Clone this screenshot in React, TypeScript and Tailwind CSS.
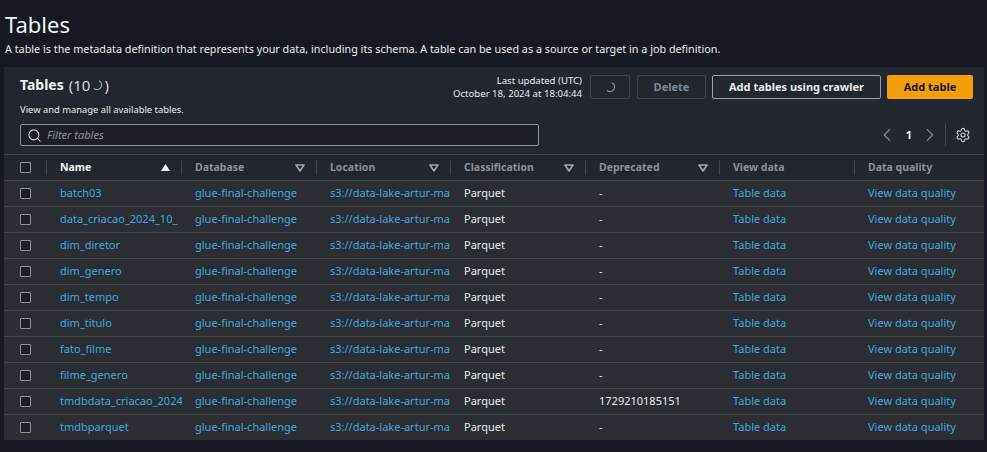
import { ChevronLeft, ChevronRight, Search, Settings } from 'lucide-react';

const FONT = 'font-["Noto_Sans",sans-serif]';

const TABLE_NAMES = [
  'batch03',
  'data_criacao_2024_10_',
  'dim_diretor',
  'dim_genero',
  'dim_tempo',
  'dim_titulo',
  'fato_filme',
  'filme_genero',
  'tmdbdata_criacao_2024',
  'tmdbparquet',
];

const HEADERS = [
  { label: 'Database', width: 'w-[135px]', filter: true },
  { label: 'Location', width: 'w-[134px]', filter: true },
  { label: 'Classification', width: 'w-[135px]', filter: true },
  { label: 'Deprecated', width: 'w-[134px]', filter: true },
  { label: 'View data', width: 'w-[135px]', filter: false },
  { label: 'Data quality', width: 'flex-1', filter: false },
];

function Spinner({ size, className }: { size: number; className: string }) {
  return (
    <svg width={size} height={size} viewBox="0 0 16 16" fill="none" className={className}>
      <path d="M11 2.8A6 6 0 0 1 8 14a6 6 0 0 1-3.5-1.1" stroke="currentColor" strokeWidth="1.5" strokeLinecap="round" />
    </svg>
  );
}

function FilterCaret() {
  return (
    <svg width="10" height="8" viewBox="0 0 10 8" fill="none" className="shrink-0">
      <path d="M1 1h8L5 7z" stroke="#9ba7b6" strokeWidth="1.6" strokeLinejoin="round" />
    </svg>
  );
}

function Checkbox() {
  return <div className="size-[11px] rounded-[1px] border border-[#8d9199] bg-[#1b1e26]" />;
}

function Row({ name }: { name: string }) {
  const deprecated = name === 'tmdbdata_criacao_2024' ? '1729210185151' : '-';
  return (
    <div className="flex h-[26px] items-center border-t border-[#41454c] bg-[#2a2d33] pb-[2px] text-[11px] leading-[16px]">
      <div className="flex w-[43px] shrink-0 pl-[16px] pt-[2px]">
        <Checkbox />
      </div>
      <div className="w-[135px] shrink-0 overflow-hidden whitespace-nowrap pl-[13px] text-[#44a9dc]">{name}</div>
      <div className="w-[135px] shrink-0 pl-[13px] text-[#44a9dc]">glue-final-challenge</div>
      <div className="w-[134px] shrink-0 overflow-hidden whitespace-nowrap pl-[13px] text-[#44a9dc]">
        s3://data-lake-artur-ma
      </div>
      <div className="w-[135px] shrink-0 pl-[13px] text-[#e9ebed]">Parquet</div>
      <div className="w-[134px] shrink-0 pl-[13px] text-[#e9ebed]">{deprecated}</div>
      <div className="w-[135px] shrink-0 pl-[13px] text-[#44a9dc]">Table data</div>
      <div className="flex-1 pl-[13px] text-[#44a9dc]">View data quality</div>
    </div>
  );
}

export default function App() {
  return (
    <div className={`h-[452px] w-[987px] overflow-hidden bg-[#161823] ${FONT}`}>
      <div className="px-[5px] pt-[10px]">
        <h1 className="text-[22px] leading-[28px] font-normal text-[#f2f3f3]">Tables</h1>
        <p className="mt-[3px] text-[10.8px] leading-[16px] text-[#e9ebed]">
          A table is the metadata definition that represents your data, including its schema. A table can be used as a
          source or target in a job definition.
        </p>
      </div>

      <div className="mx-[4px] mt-[10px] w-[980px] overflow-hidden bg-[#22262e]">
        {/* Header */}
        <div className="flex items-start justify-between pl-[16px] pr-[11px] pt-[8px]">
          <div>
            <div className="flex items-center text-[14px] leading-[20px] text-[#f2f3f3]">
              <span className="font-bold">Tables</span>
              <span className="ml-[5px] flex items-center text-[15px] text-[#d1d5db]">
                (10
                <Spinner size={12} className="mx-[1px] text-[#9ba7b6]" />)
              </span>
            </div>
            <p className="mt-[8px] text-[9.4px] leading-[14px] text-[#e9ebed]">View and manage all available tables.</p>
          </div>
          <div className="-mt-px flex items-center">
            <div className="text-right text-[9.6px] leading-[13px] text-[#e9ebed]">
              <div>Last updated (UTC)</div>
              <div>October 18, 2024 at 18:04:44</div>
            </div>
            <button className="ml-[8px] flex h-[24px] w-[40px] items-center justify-center rounded-[2px] border border-[#41454c] text-[#8d9199]">
              <Spinner size={12} className="text-[#8d9199]" />
            </button>
            <button className="ml-[7px] h-[24px] w-[69px] rounded-[2px] border border-[#41454c] text-[11px] font-bold text-[#7d8998]">
              Delete
            </button>
            <button className="ml-[6px] h-[24px] w-[169px] rounded-[2px] border border-[#9ba1a8] text-[11px] font-bold text-[#e9ebed]">
              Add tables using crawler
            </button>
            <button className="ml-[6px] h-[24px] w-[86px] rounded-[2px] bg-[#f59e0b] text-[11px] font-bold text-[#16191f]">
              Add table
            </button>
          </div>
        </div>

        {/* Filter and pagination */}
        <div className="mt-[7px] flex h-[22px] items-center pl-[16px] pr-[13px]">
          <div className="flex h-[22px] w-[519px] items-center rounded-[2px] border border-[#8d9199] bg-[#1b1e26] pl-[6px]">
            <Search size={15} strokeWidth={1.7} className="text-[#d1d5db]" />
            <span className="ml-[5px] text-[11px] italic text-[#8d9199]">Filter tables</span>
          </div>
          <div className="ml-auto flex items-center">
            <ChevronLeft size={22} strokeWidth={1.2} className="text-[#7d8998]" />
            <span className="ml-[8px] text-[11px] font-bold text-[#f2f3f3]">1</span>
            <ChevronRight size={22} strokeWidth={1.2} className="ml-[7px] text-[#7d8998]" />
            <div className="ml-[4px] h-[22px] w-px bg-[#41454c]" />
            <Settings size={16} strokeWidth={1.6} className="ml-[9px] text-[#d1d5db]" />
          </div>
        </div>

        {/* Table */}
        <div className="mt-[8px] flex h-[26px] items-center border-t border-[#41454c] text-[10.5px] font-bold text-[#8d9199]">
          <div className="flex w-[43px] shrink-0 items-center justify-between pl-[16px]">
            <Checkbox />
            <div className="h-[15px] w-px bg-[#41454c]" />
          </div>
          <div className="flex w-[135px] shrink-0 items-center justify-between pl-[13px] text-[#f2f3f3]">
            Name
            <div className="flex items-center gap-[11px]">
              <svg width="9" height="7" viewBox="0 0 9 7">
                <path d="M4.5 0 9 7H0z" fill="#f2f3f3" />
              </svg>
              <div className="h-[15px] w-px bg-[#41454c]" />
            </div>
          </div>
          {HEADERS.map((h) => (
            <div key={h.label} className={`flex ${h.width} shrink-0 items-center justify-between pl-[13px]`}>
              {h.label}
              {h.label !== 'Data quality' && (
                <div className="flex items-center gap-[11px]">
                  {h.filter && <FilterCaret />}
                  <div className="h-[15px] w-px bg-[#41454c]" />
                </div>
              )}
            </div>
          ))}
        </div>
        {TABLE_NAMES.map((name) => (
          <Row key={name} name={name} />
        ))}
      </div>
    </div>
  );
}
